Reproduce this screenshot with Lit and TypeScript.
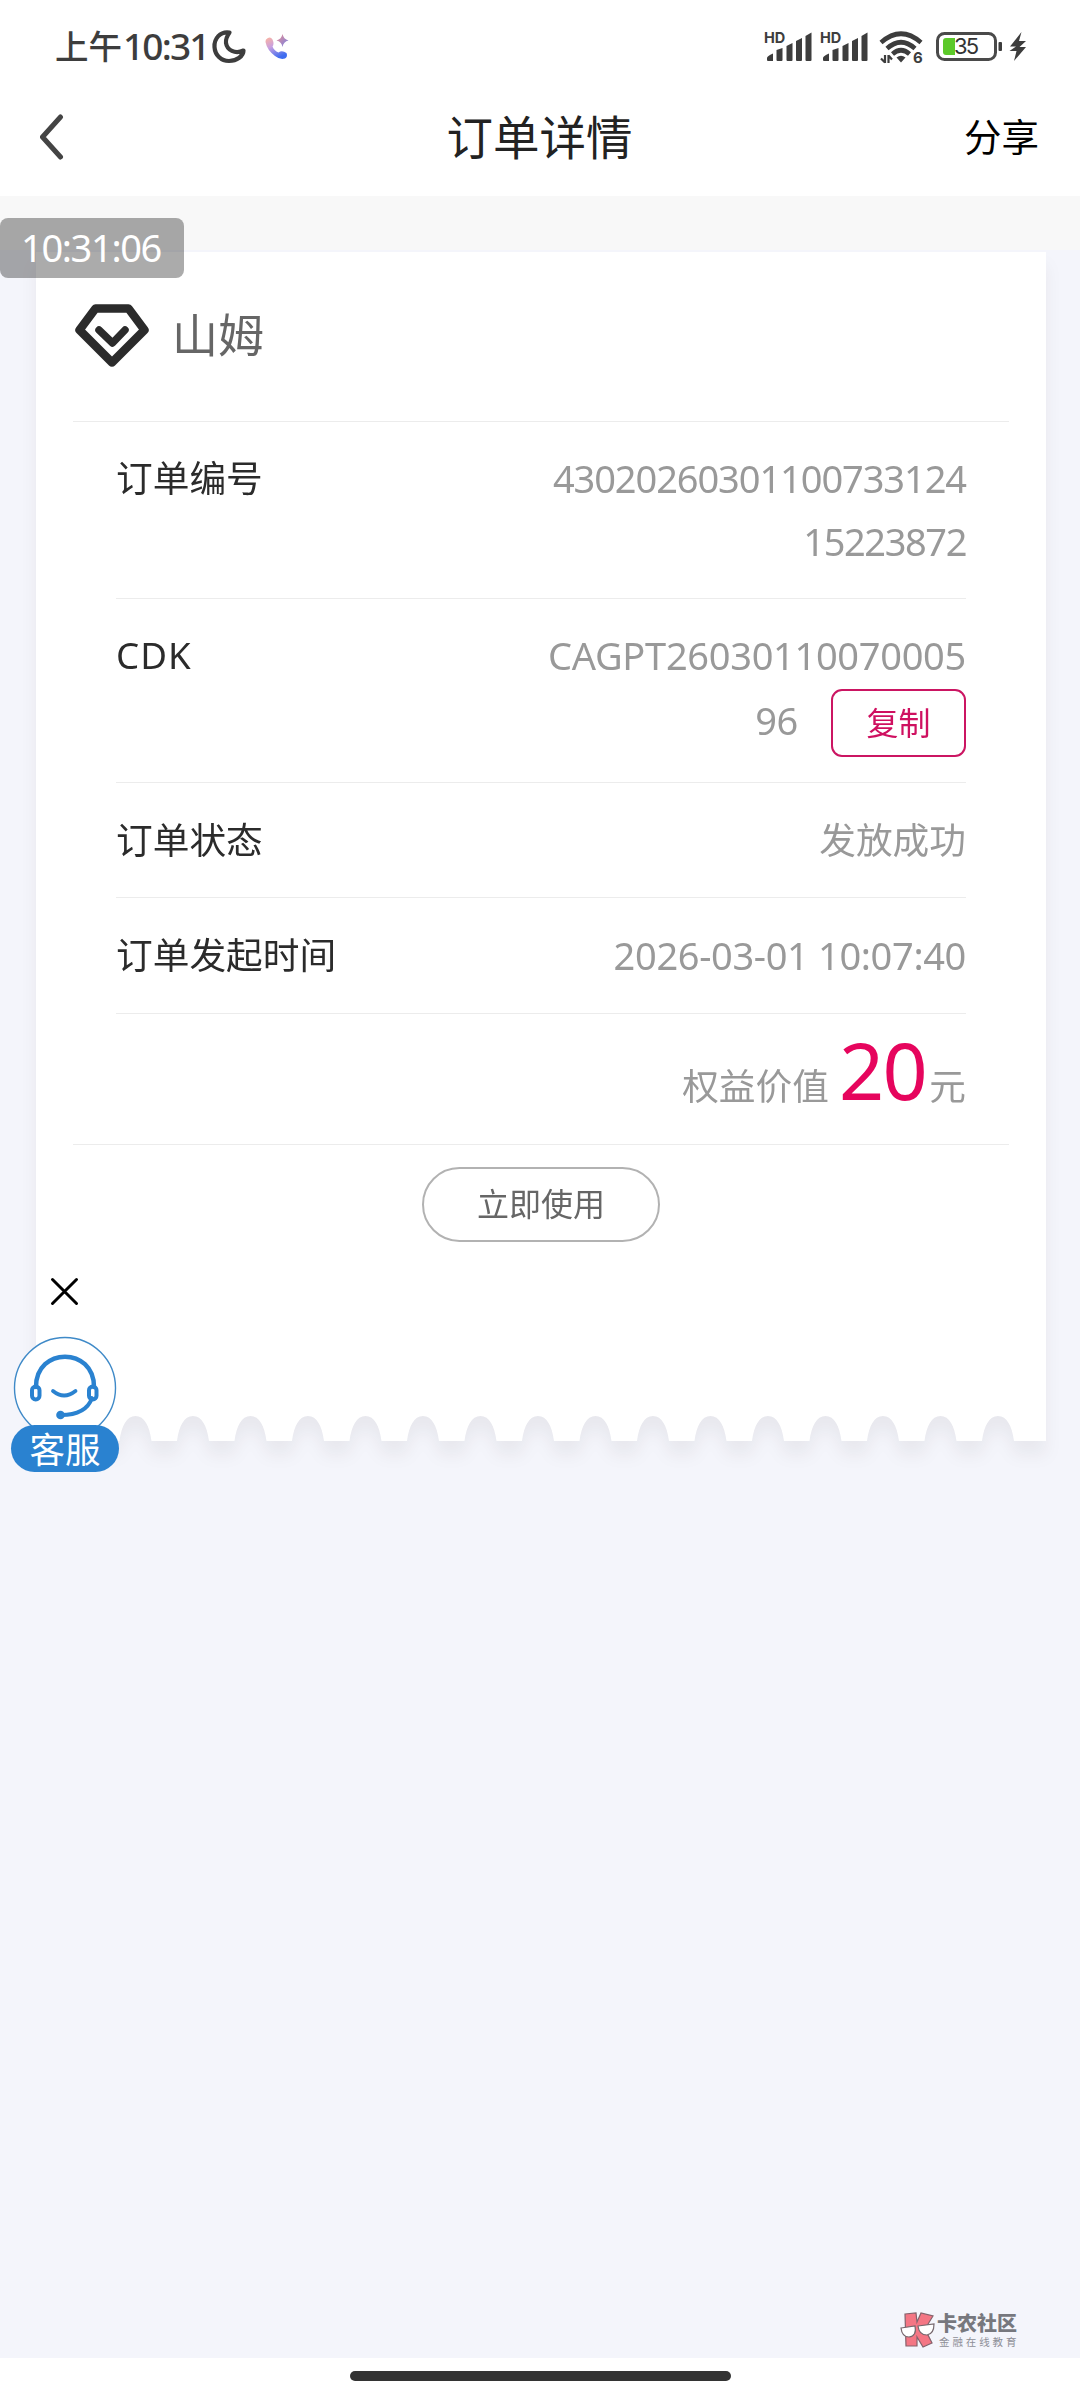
import { LitElement, html, css, svg } from "lit";
import { customElement } from "lit/decorators.js";

const EDGE_WIDTH = 1010;
const EDGE_HEIGHT = 26;
const NOTCH_PITCH = 57.5;
const NOTCH_FIRST = 42;
const NOTCH_COUNT = 17;

function edgePath(): string {
  let d = `M0 0H${EDGE_WIDTH}V${EDGE_HEIGHT}`;
  for (let i = NOTCH_COUNT - 1; i >= 0; i--) {
    const c = NOTCH_FIRST + i * NOTCH_PITCH;
    d += `H${c + 16}C${c + 14} 11 ${c + 9} 1 ${c} 1S${c - 14} 11 ${c - 16} ${EDGE_HEIGHT}`;
  }
  return d + "H0Z";
}

const signal = (x: number) => svg`
  <g transform="translate(${x} 0)" fill="#3d3d3d">
    <text x="-1" y="42.500" font-size="14.5" font-weight="700" class="tiny">HD</text>
    <path d="M2 61v-3q0-2 6-4.500v7.500q0 0-1 0h-4q-1 0-1-1z"/>
    <path d="M11.500 60v-10l6-2v12q0 1-1 1h-4q-1 0-1-1z"/>
    <path d="M21.500 60v-14l6-3v17q0 1-1 1h-4q-1 0-1-1z"/>
    <path d="M31 60v-19l6-3v22q0 1-1 1h-4q-1 0-1-1z"/>
    <path d="M40.500 60v-24l6-3.500v27.500q0 1-1 1h-4q-1 0-1-1z"/>
  </g>`;

@customElement("app-root")
export class AppRoot extends LitElement {
  static styles = css`
    :host {
      display: block;
      position: relative;
      width: 1080px;
      height: 2400px;
      overflow: hidden;
      background: #f4f5fb;
      font-family: "Noto Sans", "Noto Sans CJK SC", sans-serif;
      color: #2b2b2b;
      white-space: nowrap;
    }
    * { box-sizing: border-box; }
    svg { display: block; }
    .tiny { font-family: "Inter", sans-serif; }
    .screen { display: flex; flex-direction: column; height: 2400px; }
    .status {
      display: flex; justify-content: space-between;
      height: 92px; background: #fff; padding-left: 55px;
      flex: none;
    }
    .clock { display: flex; height: 92px; align-items: center; font-weight: 500; color: #3d3d3d; }
    .ampm { font-size: 33.500px; line-height: 94px; }
    .time { font-size: 37px; line-height: 92px; letter-spacing: -1.800px; margin: 0 -4px 0 1px; }
    .nav {
      display: grid; grid-template-columns: 1fr auto 1fr; align-items: center;
      height: 104px; padding: 0 41px 14px 40px; background: #fff; flex: none;
    }
    .title { font-size: 46.500px; line-height: 64px; color: #222; }
    .share { font-size: 37.500px; line-height: 60px; text-align: right; color: #000; }
    .band { height: 54px; background: #f8f8f8; flex: none; }
    .ticket {
      margin: 2px 34px 0 36px; flex: none; position: relative;
      filter: drop-shadow(0 14px 8px rgba(30, 20, 20, 0.055));
    }
    .body { background: #fff; height: 1163px; padding: 0 37px; }
    .brand {
      display: flex; align-items: center; gap: 21px; height: 170px;
      border-bottom: 1px solid #ececec; padding-bottom: 4px;
    }
    .name { font-size: 46px; line-height: 60px; color: #666; margin-top: -2px; }
    .rows { padding: 0 43px 0; }
    .row {
      display: flex; justify-content: space-between; align-items: center;
      border-bottom: 1px solid #ececec; font-size: 36.700px; line-height: 63px;
    }
    .top { align-items: flex-start; }
    .id { height: 177px; padding-top: 25px; }
    .cdk { height: 184px; padding-top: 25px; }
    .latin { letter-spacing: 1px; }
    .state { height: 115px; }
    .when { height: 116px; }
    .value { color: #999; display: flex; flex-direction: column; align-items: flex-end; }
    .num { font-size: 38px; }
    .n1 { letter-spacing: -1.080px; }
    .n2 { letter-spacing: -1.400px; }
    .n3 { letter-spacing: -0.300px; }
    .n4 { letter-spacing: -0.350px; }
    .codeline { display: flex; gap: 33px; align-items: center; height: 68px; margin-top: 2px; }
    .rest { padding-bottom: 5px; }
    .copy {
      width: 135px; height: 68px; border: 2px solid #cb1562; border-radius: 11px;
      color: #cf1060; font-size: 32px; line-height: 64px; text-align: center;
    }
    .worth {
      display: flex; align-items: baseline; justify-content: flex-end;
      height: 130px; padding: 0 43px 0 0; font-size: 36.700px; line-height: 112px; color: #999;
    }
    .amount { font-size: 79px; color: #e6055d; letter-spacing: -1.500px; margin: 0 3px 0 10px; }
    .foot { border-top: 1px solid #ececec; display: flex; justify-content: center; padding-top: 22px; }
    .use {
      width: 238px; height: 75px; border: 2px solid #b2b2b2; border-radius: 38px;
      font-size: 32px; line-height: 69px; text-align: center; color: #666;
    }
    .gap { flex: 1; }
    .home { height: 42px; background: #fff; flex: none; display: flex; justify-content: center; padding-top: 13px; }
    .bar { width: 381px; height: 10px; border-radius: 5px; background: #333; }
    .stamp {
      position: absolute; left: 0; top: 218px; width: 184px; height: 60px;
      border-radius: 8px; background: rgba(0, 0, 0, 0.33); color: #fff;
      font-size: 38px; line-height: 59px; padding-left: 21px; letter-spacing: -1.350px;
    }
    .service { position: absolute; left: 8px; top: 1270px; width: 114px; }
    .tag {
      position: relative; width: 108px; height: 47px; margin: -27px 0 0 3px; border-radius: 24px;
      background: #2a82d0; color: #fff; font-size: 35.500px; line-height: 48px; text-align: center;
    }
    .mark { position: absolute; left: 900px; top: 2311px; display: flex; gap: 2px; }
    .words { display: flex; flex-direction: column; color: #77787e; }
    .w1 { font-size: 20px; line-height: 25px; font-weight: 900; }
    .w2 { font-size: 10.500px; line-height: 12px; letter-spacing: 2.900px; padding-left: 2px; color: #8e8f97; }
  `;

  render() {
    return html`
      <div class="screen">
        <div class="status">
          <div class="clock">
            <span class="ampm">上午</span><span class="time">10:31</span>
            <svg width="110" height="92" viewBox="207 0 110 92">
              <defs>
                <linearGradient id="call" x1="0" y1="0" x2="0.500" y2="1">
                  <stop offset="0" stop-color="#ffb59d"/><stop offset=".45" stop-color="#c9a0e0"/><stop offset="1" stop-color="#3f6df0"/>
                </linearGradient>
                <linearGradient id="star" x1="0" y1="0" x2="1" y2="1">
                  <stop offset="0" stop-color="#f09090"/><stop offset="1" stop-color="#6f80e8"/>
                </linearGradient>
              </defs>
              <path d="M231.500 32.500C222 31 216 39 216.500 47C217 55 223 61 231 61C239 61 245.500 56 245.500 50.500C237 54.500 229 50 228 43C227.500 39 229 36 231.500 32.500Z" fill="none" stroke="#3d3d3d" stroke-width="4.200" stroke-linejoin="round"/>
              <path d="M268 39.500q4-4 6.500 0q2 4.500 0 7q1.500 4 6 6q3.500-2.500 8 .5q1.500 3.500-1.500 5.500q-5 1.500-10-2.500q-8-6-9.500-14q0-1.500 .5-2.500z" fill="url(#call)"/>
              <path d="M284.500 34q1 5 6 6.500q-5 1-6 6.500q-1-5.500-6-6.500q5-1.500 6-6.500z" fill="url(#star)"/>
            </svg>
          </div>
          <svg width="320" height="92" viewBox="760 0 320 92">
            ${signal(765)} ${signal(821)}
            <g fill="none" stroke="#3d3d3d" stroke-width="4.600">
              <path d="M881 42.500Q901 25 921 42.500"/>
              <path d="M887 48.500Q901 36 915 48.500"/>
              <path d="M892.500 54Q901 46.500 909.500 54"/>
            </g>
            <path d="M896.500 57.500Q901 54 905.500 57.500L901 62.500Z" fill="#3d3d3d"/>
            <path d="M885 55v8M881 58.500l4 4M888.500 63v-8M888.500 55.500l3.500 4" fill="none" stroke="#3d3d3d" stroke-width="2.200"/>
            <text x="913" y="62.500" font-size="15" font-weight="700" class="tiny" fill="#3d3d3d">6</text>
            <rect x="937.500" y="33.500" width="58" height="26" rx="7" fill="#fff" stroke="#4a4a4a" stroke-width="3"/>
            <path d="M946 38h9v17h-9q-3 0-3-3v-11q0-3 3-3z" fill="#5cc92a"/>
            <text x="954" y="54" font-size="22" textLength="25" class="tiny" fill="#333">35</text>
            <rect x="998.500" y="42" width="3.500" height="9" rx="1" fill="#3d3d3d"/>
            <path d="M1021.500 32L1010 46.500H1016L1009.500 51H1016.500L1014 61L1026 47H1019.500L1026 41H1019Z" fill="#3d3d3d"/>
          </svg>
        </div>

        <div class="nav">
          <svg width="30" height="48" viewBox="0 0 30 48">
            <path d="M20.500 4L2.500 24L20.500 44" fill="none" stroke="#444" stroke-width="5" stroke-linecap="round" stroke-linejoin="round"/>
          </svg>
          <span class="title">订单详情</span>
          <span class="share">分享</span>
        </div>
        <div class="band"></div>

        <div class="ticket">
          <div class="body">
            <div class="brand">
              <svg width="78" height="68" viewBox="0 0 78 68">
                <path d="M22.500 7.500H55.500L71.500 29L39 61.500L6.500 29Z" fill="none" stroke="#2b2b2b" stroke-width="8.500" stroke-linejoin="round"/>
                <path d="M26 29L39.500 42L52 29" fill="none" stroke="#2b2b2b" stroke-width="7.500" stroke-linecap="round" stroke-linejoin="round"/>
              </svg>
              <span class="name">山姆</span>
            </div>
            <div class="rows">
              <div class="row top id">
                <span>订单编号</span>
                <div class="value num"><span class="n1">43020260301100733124</span><span class="n2">15223872</span></div>
              </div>
              <div class="row top cdk">
                <span class="latin">CDK</span>
                <div class="value num">
                  <span class="n3">CAGPT26030110070005</span>
                  <div class="codeline"><span class="rest n3">96</span><div class="copy">复制</div></div>
                </div>
              </div>
              <div class="row state"><span>订单状态</span><span class="value">发放成功</span></div>
              <div class="row when"><span>订单发起时间</span><span class="value num n4">2026-03-01 10:07:40</span></div>
            </div>
            <div class="worth"><span>权益价值</span><span class="amount">20</span><span>元</span></div>
            <div class="foot"><div class="use">立即使用</div></div>
          </div>
          <svg width="${EDGE_WIDTH}" height="${EDGE_HEIGHT}" viewBox="0 0 ${EDGE_WIDTH} ${EDGE_HEIGHT}">
            <path d="${edgePath()}" fill="#fff"/>
          </svg>
        </div>
        <div class="gap"></div>
        <div class="home"><div class="bar"></div></div>
      </div>

      <div class="stamp">10:31:06</div>

      <div class="service">
        <svg width="114" height="182" viewBox="8 1270 114 182">
          <path d="M52.500 1279.500L76.500 1303.500M76.500 1279.500L52.500 1303.500" stroke="#000" stroke-width="3" stroke-linecap="round"/>
          <circle cx="65" cy="1388" r="50.500" fill="#fff" stroke="#3f8ac8" stroke-width="1.400"/>
          <g fill="none" stroke="#2a82d0" stroke-linecap="round">
            <path d="M36 1387C36 1346.500 94 1346.500 94 1387" stroke-width="4.500"/>
            <rect x="32" y="1386.500" width="7.500" height="13" rx="3.700" stroke-width="4"/>
            <rect x="89" y="1386.500" width="7.500" height="13" rx="3.700" stroke-width="4"/>
            <path d="M53 1391Q64 1400 75.500 1391" stroke-width="3.800"/>
            <path d="M92 1398Q86 1415 61 1415" stroke-width="3.800"/>
          </g>
          <circle cx="60.500" cy="1415" r="4.300" fill="#2a82d0"/>
        </svg>
        <div class="tag">客服</div>
      </div>

      <div class="mark">
        <svg width="35" height="39" viewBox="0 0 35 39">
          <path d="M5 3L16 2L17 11L21 2L33 5L25 18L32 32L23 36L17 26L17 35L6 35Z" fill="#f47684" stroke="#85626c" stroke-width="1.200"/>
          <path d="M1 17L15 15Q17 25 9 26Q2 26 1 17ZM18 15L34 13Q34 23 27 24Q19 24 18 15Z" fill="#fff" stroke="#77686e" stroke-width="1.200"/>
        </svg>
        <div class="words"><span class="w1">卡农社区</span><span class="w2">金融在线教育</span></div>
      </div>
    `;
  }
}
